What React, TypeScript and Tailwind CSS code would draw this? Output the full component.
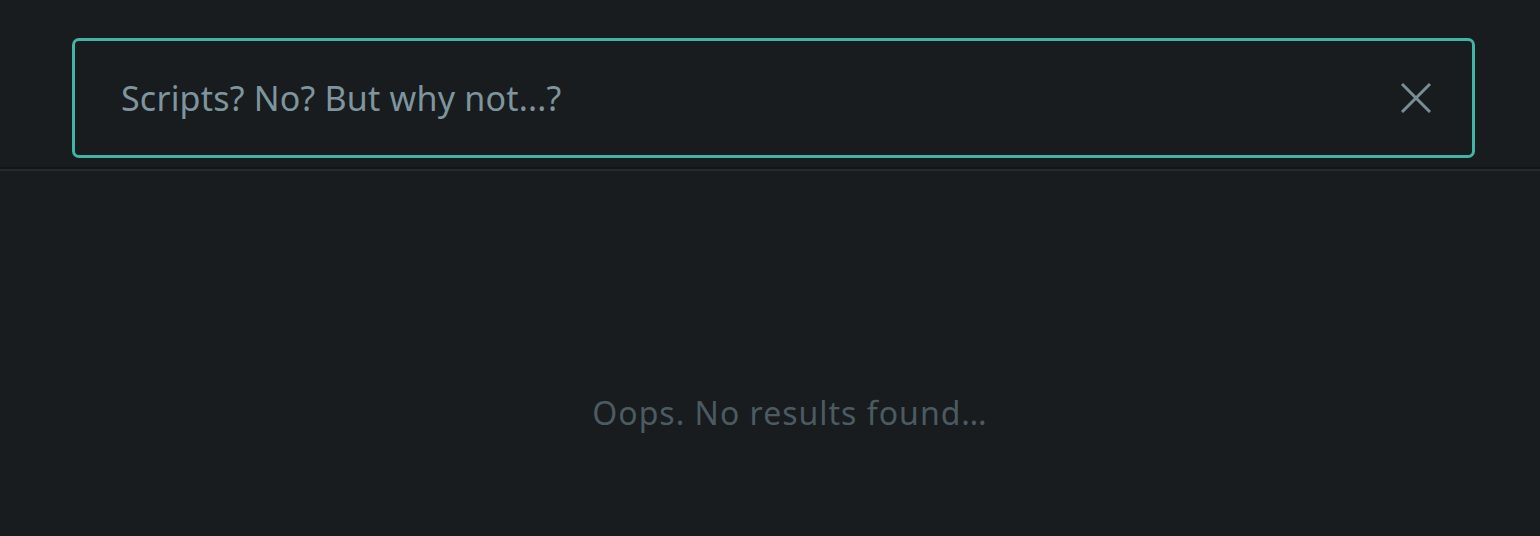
import React, { useState } from 'react';

export default function App() {
  const [query, setQuery] = useState('Scripts? No? But why not...?');

  return (
    <div
      className="min-h-[536px] w-full bg-[#181c1e]"
      style={{ fontFamily: '"Noto Sans", "DejaVu Sans", sans-serif' }}
    >
      <div className="pl-[72px] pr-[65px] pt-[38px] pb-[11px] border-b-2 border-[#262b2d] shadow-[inset_0_-2px_0_#111618]">
        <div className="flex h-[120px] items-center rounded-[7px] border-[3px] border-[#40b5a4] pl-[46px] pr-[40px]">
          <input
            autoFocus
            value={query}
            onChange={(e) => setQuery(e.target.value)}
            className="flex-1 bg-transparent text-[34px] tracking-[0.2px] text-[#7f959e] caret-[#7f959e] outline-none"
          />
          <button className="ml-4 flex size-8 items-center justify-center text-[#7a8d95]" aria-label="Clear">
            <svg width="30" height="30" viewBox="0 0 30 30" fill="none" stroke="currentColor" strokeWidth="3">
              <path d="M1 1 L29 29 M29 1 L1 29" />
            </svg>
          </button>
        </div>
      </div>

      <div className="flex h-[365px] items-center justify-center pl-[40px]">
        <p className="pt-[118px] text-[32px] tracking-[1px] text-[#4c5a61]">Oops. No results found…</p>
      </div>
    </div>
  );
}
